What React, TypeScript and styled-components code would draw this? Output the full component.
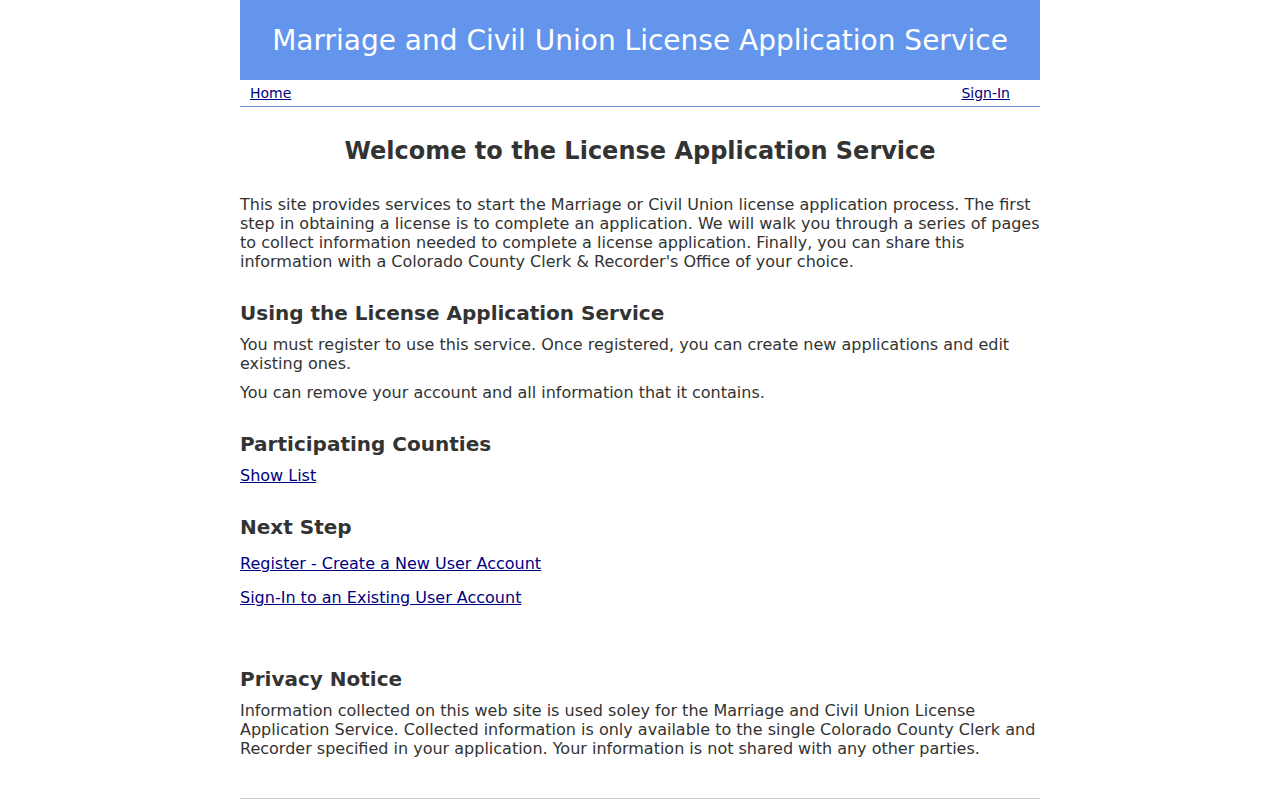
import React from 'react';
import styled, { createGlobalStyle } from 'styled-components';

const GlobalStyle = createGlobalStyle`
  body {
    margin: 0;
    background: #fff;
    font-family: "DejaVu Sans", Verdana, sans-serif;
    color: #333;
  }
`;

const App: React.FC = () => {
  return (
    <>
      <GlobalStyle />
      <Page>
        <Banner>
          <BannerTitle>Marriage and Civil Union License Application Service</BannerTitle>
        </Banner>
        <Nav>
          <NavLink href="#">Home</NavLink>
          <NavLink href="#">Sign-In</NavLink>
        </Nav>
        <Main>
          <Title>Welcome to the License Application Service</Title>
          <Intro>
            This site provides services to start the Marriage or Civil Union license application
            process. The first step in obtaining a license is to complete an application. We will
            walk you through a series of pages to collect information needed to complete a license
            application. Finally, you can share this information with a Colorado County Clerk &amp;
            Recorder's Office of your choice.
          </Intro>

          <SectionTitle>Using the License Application Service</SectionTitle>
          <Para>
            You must register to use this service. Once registered, you can create new applications
            and edit existing ones.
          </Para>
          <Para>You can remove your account and all information that it contains.</Para>

          <SectionTitle>Participating Counties</SectionTitle>
          <Para>
            <Link href="#">Show List</Link>
          </Para>

          <SectionTitle>Next Step</SectionTitle>
          <LinkLine>
            <Link href="#">Register - Create a New User Account</Link>
          </LinkLine>
          <LinkLine>
            <Link href="#">Sign-In to an Existing User Account</Link>
          </LinkLine>

          <SectionTitle $spaced>Privacy Notice</SectionTitle>
          <Para>
            Information collected on this web site is used soley for the Marriage and Civil Union
            License Application Service. Collected information is only available to the single
            Colorado County Clerk and Recorder specified in your application. Your information is
            not shared with any other parties.
          </Para>
        </Main>
        <Footer />
      </Page>
    </>
  );
};

export default App;

const Page = styled.div`
  width: 800px;
  margin: 0 auto;
`;

const Banner = styled.header`
  height: 80px;
  background-color: #6495ed;
  display: flex;
  align-items: center;
  justify-content: center;
`;

const BannerTitle = styled.div`
  color: #fff;
  font-size: 28px;
  line-height: 33px;
`;

const Nav = styled.nav`
  display: flex;
  justify-content: space-between;
  align-items: center;
  height: 26px;
  padding: 0 30px 0 10px;
  border-bottom: 1px solid #6f8fd6;
`;

const NavLink = styled.a`
  font-size: 14px;
  color: #000080;
  text-decoration: underline;
`;

const Main = styled.main`
  display: flex;
  flex-direction: column;
  align-items: stretch;
`;

const Title = styled.h1`
  margin: 30px 0 0;
  font-size: 24px;
  line-height: 28px;
  font-weight: bold;
  text-align: center;
  color: #333;
`;

const Intro = styled.p`
  margin: 30px 0 0;
  font-size: 16px;
  line-height: 19px;
`;

const SectionTitle = styled.h2<{ $spaced?: boolean }>`
  margin: ${(p) => (p.$spaced ? '61px' : '31px')} 0 0;
  font-size: 20px;
  line-height: 23px;
  font-weight: bold;
  color: #333;
`;

const Para = styled.p`
  margin: 10px 0 0;
  font-size: 16px;
  line-height: 19px;
`;

const LinkLine = styled.p`
  margin: 15px 0 0;
  font-size: 16px;
  line-height: 19px;
`;

const Link = styled.a`
  color: #000080;
  text-decoration: underline;
`;

const Footer = styled.footer`
  margin-top: 40px;
  border-top: 1px solid #ccc;
`;
